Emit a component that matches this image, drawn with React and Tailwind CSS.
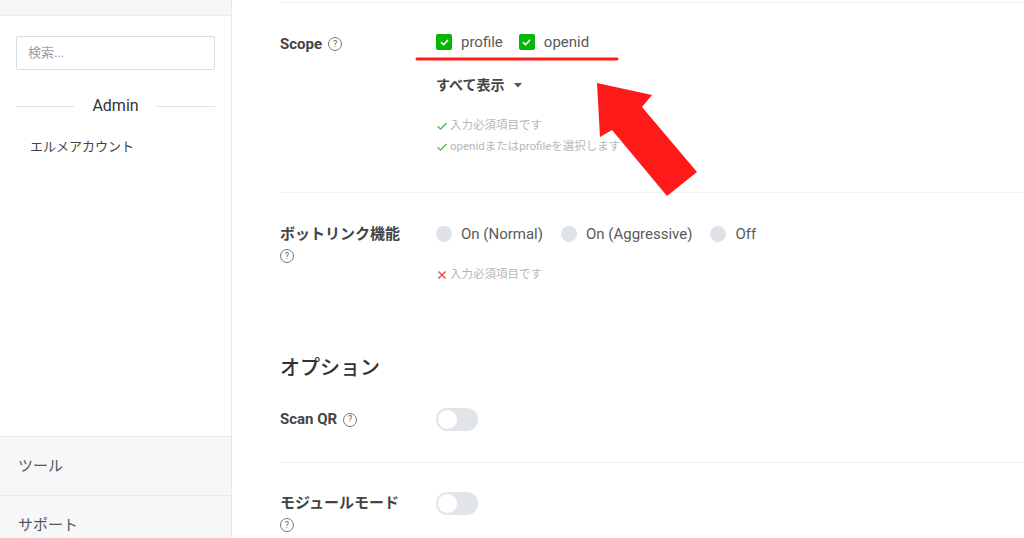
import React from 'react';

const font = { fontFamily: 'Roboto, "Noto Sans CJK JP", sans-serif' };

function Help() {
  return (
    <span className="inline-flex h-[14px] w-[14px] items-center justify-center rounded-full border border-[#777] text-[9px] font-normal leading-none text-[#666]">
      ?
    </span>
  );
}

function Check() {
  return (
    <span className="flex h-[16px] w-[16px] items-center justify-center rounded-[2px] bg-[#06b606]">
      <svg width="9" height="9" viewBox="0 0 10 10">
        <path d="M1.5 5.2 L4 7.5 L8.5 2.5" fill="none" stroke="#fff" strokeWidth="1.8" strokeLinecap="round" strokeLinejoin="round" />
      </svg>
    </span>
  );
}

function Radio({ label }) {
  return (
    <label className="flex items-center gap-[9px] text-[15px] text-[#5a5a5a]">
      <span className="h-[16px] w-[16px] rounded-full bg-[#dfe2e6]" />
      {label}
    </label>
  );
}

function Toggle() {
  return (
    <span className="flex h-[23px] w-[42px] items-center rounded-full bg-[#e1e4e8] px-[2px]">
      <span className="h-[19px] w-[19px] rounded-full bg-white" />
    </span>
  );
}

function Hint({ ok, children }) {
  return (
    <div className="flex h-[21px] items-center gap-[2px] text-[11.5px] text-[#b4b8bc]">
      {ok ? (
        <svg width="12" height="12" viewBox="0 0 12 12">
          <path d="M1.5 6.2 L4.6 9 L10.5 3" fill="none" stroke="#4cc25c" strokeWidth="1.4" />
        </svg>
      ) : (
        <svg width="12" height="12" viewBox="0 0 12 12">
          <path d="M2.5 2.5 L9.5 9.5 M9.5 2.5 L2.5 9.5" fill="none" stroke="#ef4b4b" strokeWidth="1.5" />
        </svg>
      )}
      {children}
    </div>
  );
}

function Sidebar() {
  return (
    <aside className="flex h-[554px] w-[232px] shrink-0 flex-col border-r border-[#e6e8eb] bg-white">
      <div className="h-[16px] border-b border-[#eceef0] bg-[#f5f6f8]" />
      <div className="px-4 pt-[20px]">
        <div className="flex h-[34px] items-center rounded-[2px] border border-[#d9dce0] px-[11px] text-[13px] text-[#9a9ea3]">
          検索...
        </div>
        <div className="mt-[24px] flex items-center gap-[18px]">
          <div className="h-px flex-1 bg-[#dfe2e5]" />
          <span className="text-[16px] text-[#333]">Admin</span>
          <div className="h-px flex-1 bg-[#dfe2e5]" />
        </div>
        <div className="mt-[19px] pl-[14px] text-[13px] text-[#444]">エルメアカウント</div>
      </div>
      <div className="mt-auto bg-[#f6f7f9]">
        <div className="flex h-[59px] items-center border-t border-[#e6e8eb] px-[18px] text-[15px] text-[#555]">ツール</div>
        <div className="flex h-[59px] items-center border-t border-[#e6e8eb] px-[18px] text-[15px] text-[#555]">サポート</div>
      </div>
    </aside>
  );
}

export default function App() {
  return (
    <div className="relative flex h-[538px] w-[1024px] items-start overflow-hidden bg-white" style={font}>
      <Sidebar />
      <main className="flex-1 pl-[48px]">
        <div className="h-[3px] border-b border-[#eef0f2]" />

        {/* Scope */}
        <div className="flex border-b border-[#eef0f2] pt-[28px] pb-[35px]">
          <div className="flex w-[156px] items-center gap-[6px] self-start pt-[2px] text-[15px] font-bold text-[#444]">
            Scope <Help />
          </div>
          <div>
            <div className="flex h-[22px] items-center gap-[16px] text-[15px] text-[#5a5a5a]">
              <span className="flex items-center gap-[9px]"><Check />profile</span>
              <span className="flex items-center gap-[9px]"><Check />openid</span>
            </div>
            <div className="mt-[22px] flex h-[20px] items-center gap-[10px] text-[14px] font-bold text-[#444]">
              すべて表示
              <svg width="8" height="5" viewBox="0 0 8 5"><path d="M0 0 L8 0 L4 4.5 Z" fill="#555" /></svg>
            </div>
            <div className="mt-[20px]">
              <Hint ok>入力必須項目です</Hint>
              <Hint ok>openidまたはprofileを選択します</Hint>
            </div>
          </div>
        </div>

        {/* Bot link */}
        <div className="flex pt-[30px]">
          <div className="w-[156px] self-start text-[15px] font-bold leading-[22px] text-[#444]">
            ボットリンク機能
            <div className="flex h-[22px] items-center"><Help /></div>
          </div>
          <div>
            <div className="flex h-[22px] items-center gap-[18px]">
              <Radio label="On (Normal)" />
              <Radio label="On (Aggressive)" />
              <Radio label="Off" />
            </div>
            <div className="mt-[19px]">
              <Hint>入力必須項目です</Hint>
            </div>
          </div>
        </div>

        <h2 className="mt-[69px] text-[20px] font-medium leading-[28px] text-[#333]">オプション</h2>

        {/* Scan QR */}
        <div className="flex items-center border-b border-[#eef0f2] pt-[26px] pb-[31px]">
          <div className="flex w-[156px] items-center gap-[6px] text-[15px] font-bold text-[#444]">
            Scan QR <Help />
          </div>
          <Toggle />
        </div>

        {/* Module mode */}
        <div className="flex pt-[29px]">
          <div className="w-[156px] text-[15px] font-bold leading-[22px] text-[#444]">
            モジュールモード
            <div className="flex h-[22px] items-center"><Help /></div>
          </div>
          <Toggle />
        </div>
      </main>

      {/* annotation overlay */}
      <svg className="pointer-events-none absolute inset-0" width="1024" height="538">
        <line x1="417" y1="59" x2="617" y2="59" stroke="#ff1a1a" strokeWidth="3" strokeLinecap="round" />
        <polygon points="597,83 652,95 642,107 697,172 667,196 612,130 600,137" fill="#ff1a1a" />
      </svg>
    </div>
  );
}
